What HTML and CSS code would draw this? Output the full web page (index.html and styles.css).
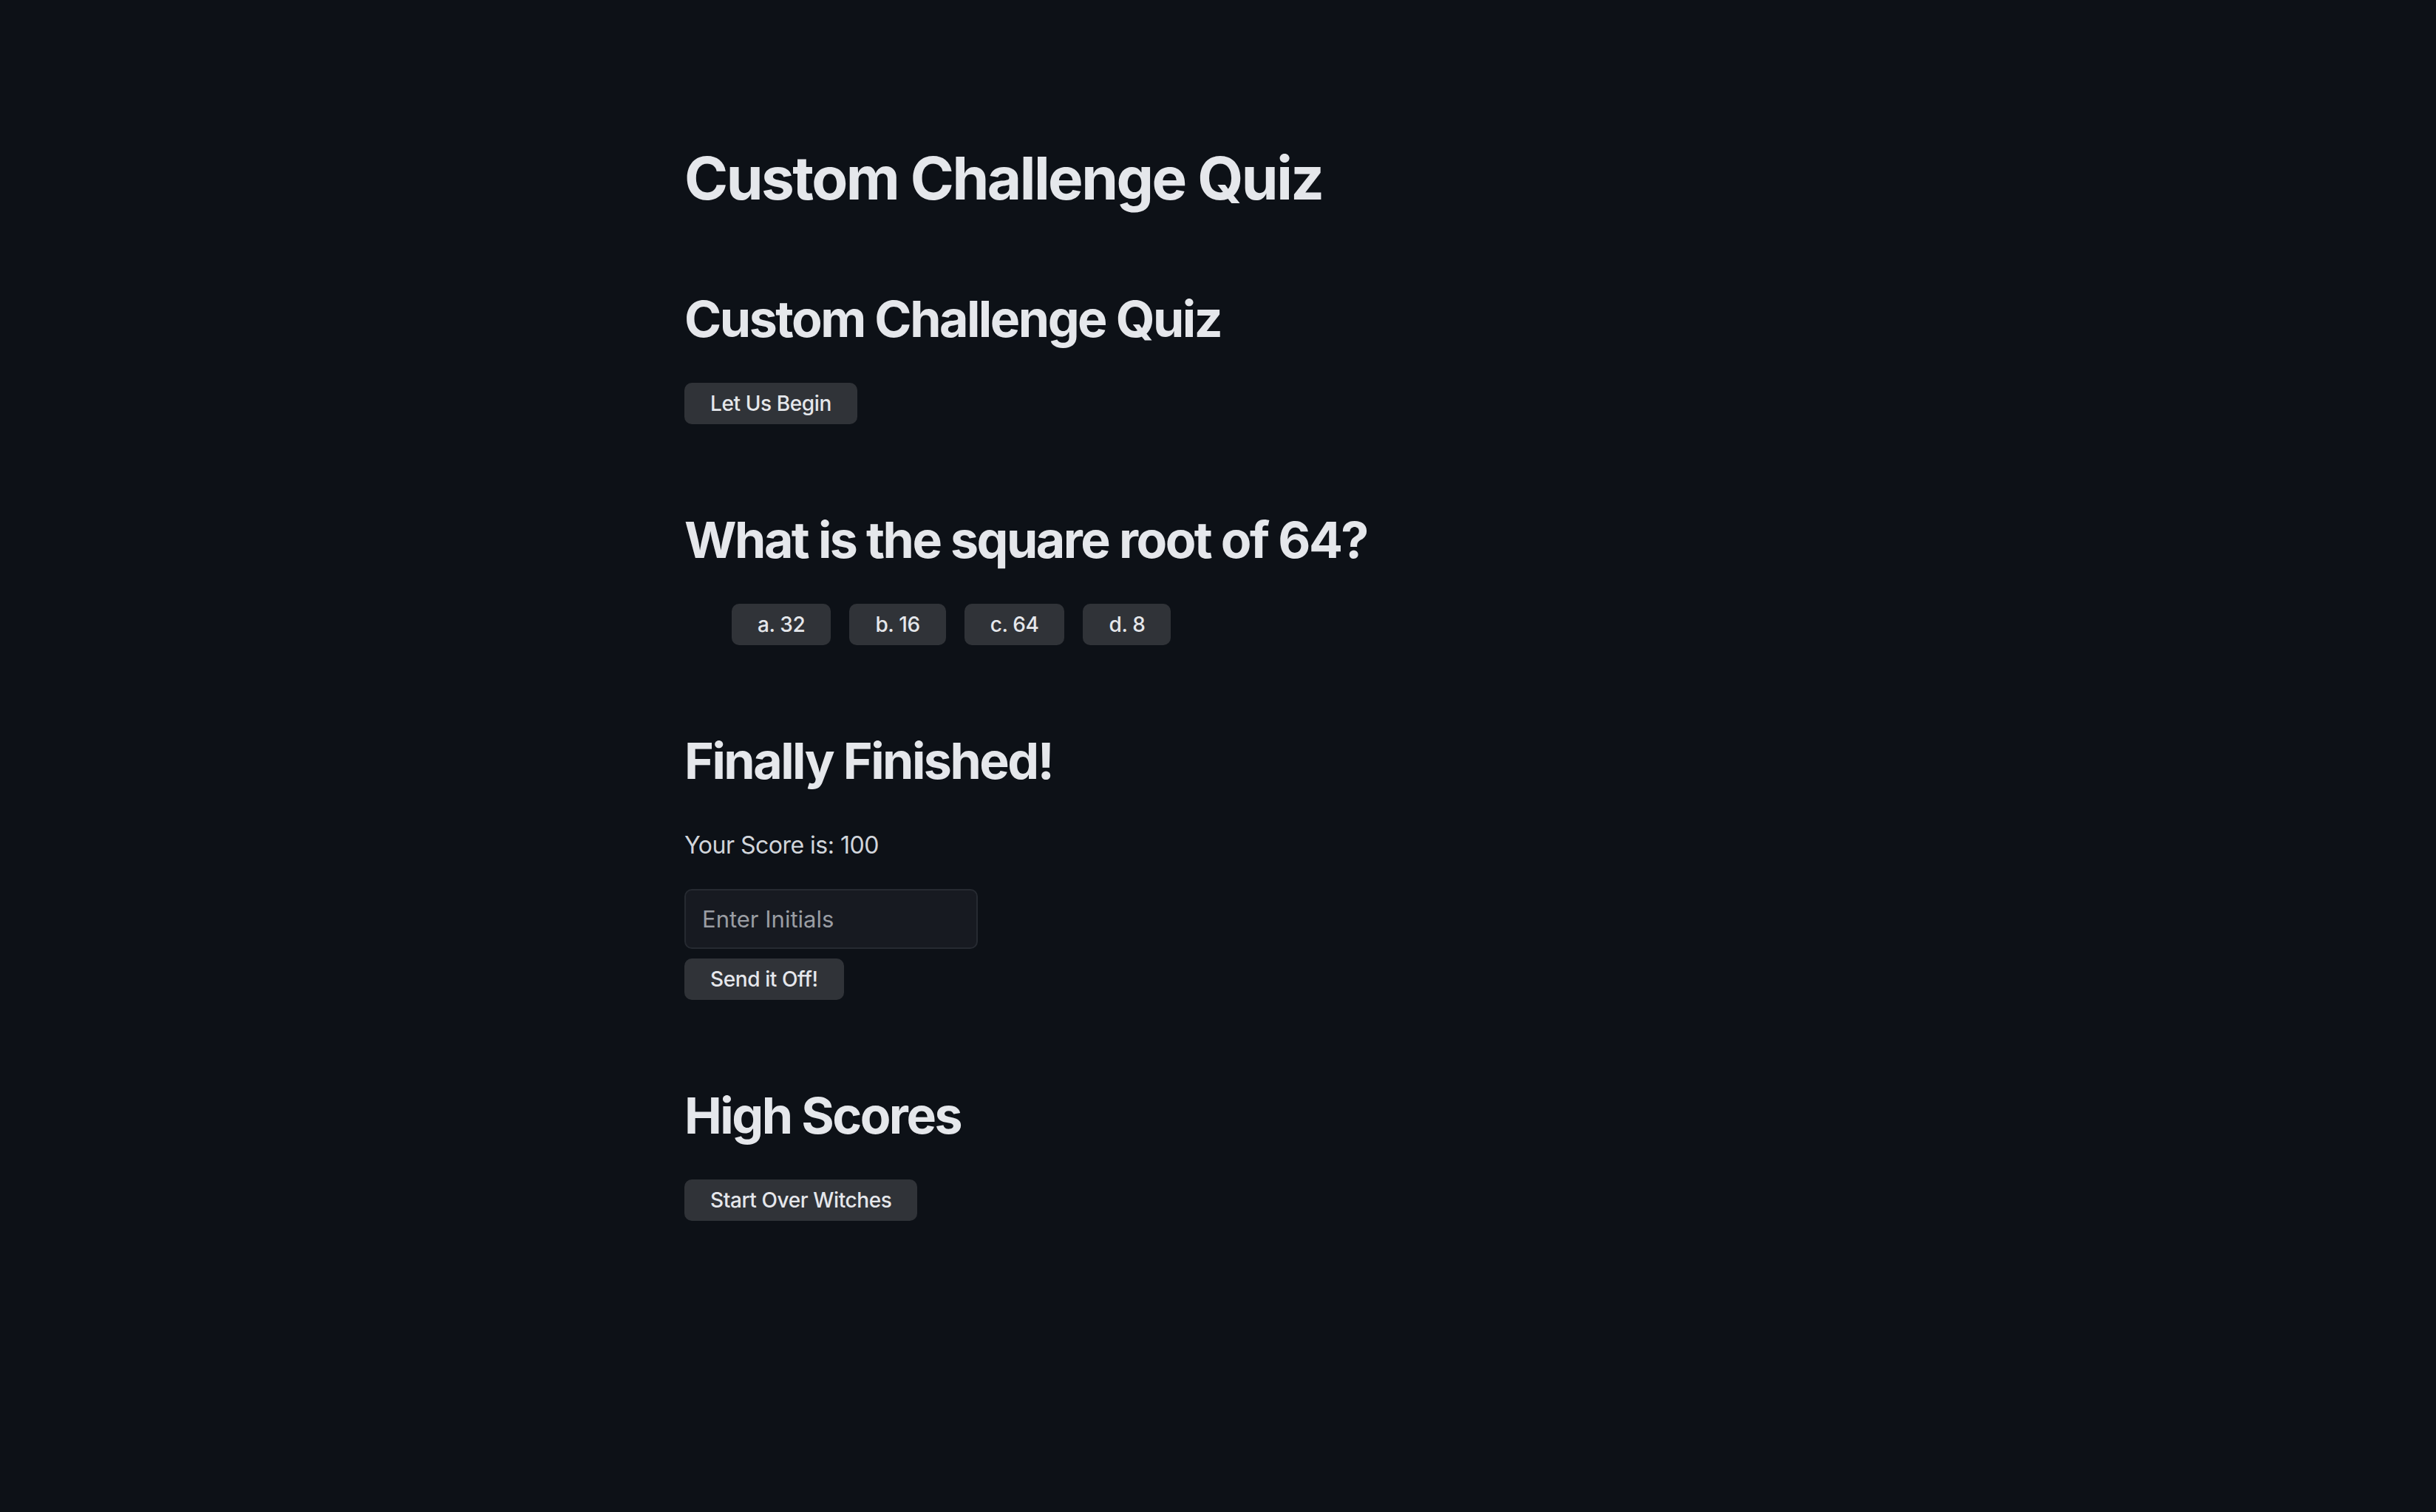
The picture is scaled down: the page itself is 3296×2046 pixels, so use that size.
FILE: index.html
```html
<!DOCTYPE html>
<html lang="en">
<head>
<meta charset="utf-8">
<title>Custom Challenge Quiz</title>
<link rel="stylesheet" href="styles.css">
</head>
<body>
<main class="quiz">
  <h1 class="page-title">Custom Challenge Quiz</h1>

  <section class="panel">
    <h2 class="panel-title">Custom Challenge Quiz</h2>
    <button class="btn" type="button">Let Us Begin</button>
  </section>

  <section class="panel">
    <h2 class="panel-title">What is the square root of 64?</h2>
    <ul class="choices">
      <li><button class="btn" type="button">a. 32</button></li>
      <li><button class="btn" type="button">b. 16</button></li>
      <li><button class="btn" type="button">c. 64</button></li>
      <li><button class="btn" type="button">d. 8</button></li>
    </ul>
  </section>

  <section class="panel">
    <h2 class="panel-title">Finally Finished!</h2>
    <p class="score">Your Score is: 100</p>
    <input class="initials" type="text" placeholder="Enter Initials">
    <button class="btn" type="button">Send it Off!</button>
  </section>

  <section class="panel">
    <h2 class="panel-title">High Scores</h2>
    <button class="btn" type="button">Start Over Witches</button>
  </section>
</main>
</body>
</html>
```

FILE: styles.css
```css
html, body {
  margin: 0;
  padding: 0;
  background: #0d1117;
}

body {
  font-family: Inter, "Noto Sans", "Liberation Sans", sans-serif;
  color: #e5e7eb;
  min-height: 2046px;
}

.quiz {
  max-width: 1444px;
  margin: 0 auto;
  padding-top: 193px;
  display: flex;
  flex-direction: column;
  align-items: flex-start;
}

.page-title {
  margin: 0 0 101px;
  font-size: 80px;
  line-height: 96px;
  font-weight: 700;
  letter-spacing: -2.5px;
  color: #e5e7eb;
}

.panel {
  display: flex;
  flex-direction: column;
  align-items: flex-start;
}

.panel + .panel {
  margin-top: 115px;
}

.panel-title {
  margin: 0 0 46px;
  font-size: 68px;
  line-height: 82px;
  font-weight: 700;
  letter-spacing: -2.5px;
  color: #e5e7eb;
}

.btn {
  font-family: Inter, "Noto Sans", "Liberation Sans", sans-serif;
  font-size: 28px;
  font-weight: 500;
  line-height: 34px;
  letter-spacing: -0.4px;
  padding: 11px 35px;
  border: 0;
  border-radius: 10px;
  background: #303338;
  color: #e5e7eb;
  cursor: pointer;
}

.choices {
  list-style: none;
  margin: 0;
  padding: 0 0 0 64px;
  display: flex;
  gap: 25px;
}

.choices li {
  margin: 0;
}

.score {
  margin: 4px 0 35px;
  font-size: 32px;
  line-height: 48px;
  letter-spacing: -0.5px;
  color: #d1d5db;
}

.initials {
  display: block;
  box-sizing: border-box;
  width: 397px;
  height: 81px;
  margin: 0 0 13px;
  padding: 0 22px;
  font-family: Inter, "Noto Sans", "Liberation Sans", sans-serif;
  font-size: 31px;
  color: #e5e7eb;
  background: #171a21;
  border: 2px solid #262a31;
  border-radius: 10px;
  outline: none;
}

.initials::placeholder {
  color: #9a9da3;
}
```
